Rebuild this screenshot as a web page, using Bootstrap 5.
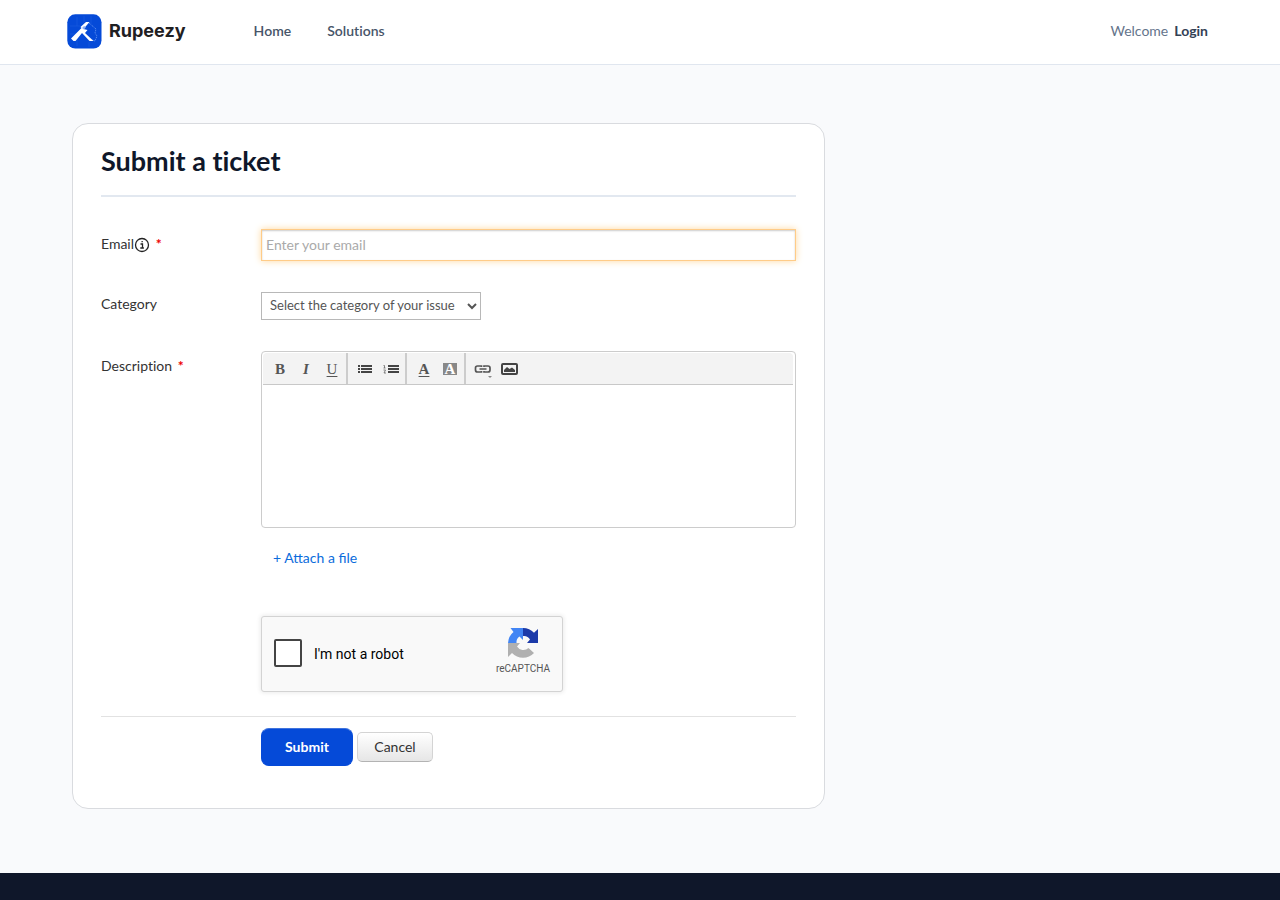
<!DOCTYPE html>
<html lang="en">
<head>
<meta charset="utf-8">
<meta name="viewport" content="width=device-width, initial-scale=1">
<title>Submit a ticket : Rupeezy</title>
<link rel="stylesheet" href="https://cdn.jsdelivr.net/npm/bootstrap@5.3.0/dist/css/bootstrap.min.css">
<style>
body { background: #f9fafc; color: #333; font-family: Lato, "Liberation Sans", sans-serif; font-size: 14px; line-height: 20px; font-variant-ligatures: no-common-ligatures; }
.wrap { width: 100%; max-width: 1168px; padding: 0 16px; margin: 0 auto; }
.topbar { border-bottom: 1px solid #e0e6ef; }
.topbar .wrap { min-height: 64px; padding-bottom: 2px; }
.brand { gap: 7px; margin-left: -5px; color: #1f2022; font: 700 18px/24px Inter, sans-serif; text-decoration: none; }
.menu { gap: 36px; margin-left: 68px; }
.menu a { color: #475569; font-weight: 600; text-decoration: none; }
.welcome { color: #64748b; }
.login { color: #334155; font-weight: 700; text-decoration: none; margin-left: 6px; }
main { padding: 58px 0 64px; }
.panel { background: #fff; border: 1px solid #d9dbdf; border-radius: 16px; padding: 20px 28px 42px; }
h1 { color: #0f172a; font-size: 27px; line-height: 34px; font-weight: 700; margin: 0 0 32px; padding-bottom: 17px; border-bottom: 2px solid #e2e8f0; }
.line { display: flex; margin-bottom: 31px; }
.line:last-of-type { margin-bottom: 0; }
.label-col { flex: 0 0 160px; }
.label-col label { display: block; padding-top: 5px; }
.label-col .lb-short { padding-top: 2px; }
.field-col { flex: 1 1 0; min-width: 0; }
.req { color: #e00; font-weight: 700; margin-left: 2px; }
.email { height: 32px; padding: 3px 4px 5px; border: 1px solid #fc8; border-radius: 0; font-size: 14px; box-shadow: inset 0 1px 2px #ccc, 0 0 7px #ffd9a0; }
.email:focus { border-color: #fc8; box-shadow: inset 0 1px 2px #ccc, 0 0 7px #ffd9a0; }
.email::placeholder { color: #aaa; }
.category { display: block; width: 220px; max-width: 100%; height: 28px; padding: 0 4px 2px; border: 1px solid #b8b8b8; background: #fff; color: #555; font-size: 13px; }
.editor { border: 1px solid #ccc; border-radius: 4px; padding: 1px 2px 2px 1px; }
.tools { background: #f3f3f3; border-bottom: 1px solid #c8c8c8; border-radius: 4px 4px 0 0; height: 32px; }
.tool-set { padding: 0 1px 0 4px; border-right: 2px solid #ccc; }
.tool-set:last-child { border-right: 0; }
.tool { width: 26px; padding: 0; border: 0; background: none; color: #555; font: 700 15px/30px "Liberation Serif", serif; }
.tool u { text-decoration-thickness: 1px; text-underline-offset: 2px; }
.tool .swatch { display: block; width: 14px; height: 12px; margin: 0 auto; background: #888; color: #fff; line-height: 12px; }
.tool svg { display: block; margin: 0 auto; }
.editor textarea { display: block; width: 100%; height: 140px; border: 0; outline: 0; resize: none; padding: 8px; }
.attach { display: inline-block; margin: 20px 12px 0; color: #0b6cdc; text-decoration: none; font-variant-ligatures: normal; }
.robot { max-width: 302px; height: 76px; margin-top: 48px; padding: 0 12px; background: #f9f9f9; border: 1px solid #d3d3d3; border-radius: 3px; box-shadow: 0 0 4px 1px rgba(0,0,0,.08); font-family: Roboto, sans-serif; color: #000; }
.robot input { appearance: none; width: 28px; height: 28px; margin: 0 12px 2px 0; border: 2px solid #444; border-radius: 2px; background: #fff; }
.robot input:checked { background: #4a90e2; }
.captcha { font-size: 10px; line-height: 12px; color: #555; margin: 0 0 6px; }
.actions { margin-top: 24px; padding: 11px 0 0 160px; border-top: 1px solid #e2e2e2; gap: 4px; }
.btn-send { width: 92px; height: 38px; padding: 0 0 1px; background: #054ad8; border: 1px solid #054ad8; border-top-color: #3f73dd; border-radius: 8px; color: #fff; font-size: 14px; font-weight: 700; }
.btn-drop { width: 76px; height: 30px; padding: 0; background: linear-gradient(#fff, #e6e6e6); border: 1px solid #d4d4d4; border-bottom-color: #b3b3b3; border-radius: 5px; color: #333; font-size: 14px; line-height: 20px; }
footer { background: #0f172a; height: 27px; }
</style>
</head>
<body>
<header class="topbar bg-white">
  <div class="wrap d-flex align-items-center">
    <a class="brand d-flex align-items-center" href="#">
      <svg width="35" height="35" viewBox="0 0 35 35" aria-hidden="true">
        <rect x=".3" y=".3" width="34.2" height="34.2" rx="8" fill="#054ad8"/>
        <path d="M10 3v9M17 2v8M24 2v8M3 12h10M3 20h6M10 22v10M22 28v5" stroke="#1c5be0" stroke-width=".6" fill="none"/>
        <path d="M22 9l7 6-1 4 2 3-2 5-3-1" fill="none" stroke="#6c9af2" stroke-width=".8" stroke-dasharray="1.2 .8"/>
        <path d="M4 24.500L14.500 14l-1-1L19 8h3.500L16.500 15l4 1-2.500 3 8.500 8H22.500L15 19 8.500 27H6.500z" fill="#fff"/>
        <path d="M15 14l2-2 2 1-2 2.500z" fill="#8fb1f2"/>
      </svg>
      <span>Rupeezy</span>
    </a>
    <nav class="menu d-flex"><a href="#">Home</a><a href="#">Solutions</a></nav>
    <div class="ms-auto"><span class="welcome">Welcome</span><a class="login" href="#">Login</a></div>
  </div>
</header>
<main>
  <div class="wrap">
    <div class="row g-0">
      <div class="col-lg-8 pe-lg-1">
        <form class="panel" onsubmit="return false">
          <h1>Submit a ticket</h1>
          <div class="line">
            <div class="label-col"><label for="email">Email<svg width="16" height="16" viewBox="0 0 16 16" aria-hidden="true"><circle cx="8" cy="8" r="6.500" fill="none" stroke="#222" stroke-width="1.300"/><path d="M6.500 7h2v4M6.300 11h3.600M7.500 4.700h1.300" fill="none" stroke="#222" stroke-width="1.300"/></svg> <span class="req">*</span></label></div>
            <div class="field-col"><input class="form-control email" id="email" type="email" placeholder="Enter your email"></div>
          </div>
          <div class="line">
            <div class="label-col"><label class="lb-short" for="category">Category</label></div>
            <div class="field-col"><select class="category" id="category"><option>Select the category of your issue</option></select></div>
          </div>
          <div class="d-flex">
            <div class="label-col"><label for="description">Description <span class="req">*</span></label></div>
            <div class="field-col">
              <div class="editor">
                <div class="tools d-flex">
                  <div class="tool-set d-flex">
                    <button class="tool" type="button" aria-label="Bold">B</button>
                    <button class="tool fst-italic" type="button" aria-label="Italic">I</button>
                    <button class="tool fw-normal" type="button" aria-label="Underline"><u>U</u></button>
                  </div>
                  <div class="tool-set d-flex">
                    <button class="tool" type="button" aria-label="Bulleted list"><svg width="14" height="10" viewBox="0 0 14 10"><path d="M0 2h2M0 5h2M0 8h2M3 2h11M3 5h11M3 8h11" stroke="#444" stroke-width="2"/></svg></button>
                    <button class="tool" type="button" aria-label="Numbered list"><svg width="16" height="10" viewBox="0 0 16 10"><path d="M5 2h11M5 5h11M5 8h11" stroke="#444" stroke-width="2"/><path d="M.5 1.500h1V4M.5 4h2M.5 6h2L1 9h2" fill="none" stroke="#666" stroke-width=".8"/></svg></button>
                  </div>
                  <div class="tool-set d-flex">
                    <button class="tool" type="button" aria-label="Text colour"><u>A</u></button>
                    <button class="tool" type="button" aria-label="Background colour"><span class="swatch">A</span></button>
                  </div>
                  <div class="tool-set d-flex">
                    <button class="tool" type="button" aria-label="Link"><svg width="18" height="20" viewBox="0 0 18 20"><path d="M7.500 8V7H3.500a2 2 0 0 0-2 2v2a2 2 0 0 0 2 2h4v-1M10 8V7h4a2 2 0 0 1 2 2v2a2 2 0 0 1-2 2h-4v-1M5.500 10h7" fill="none" stroke="#555" stroke-width="1.700"/><path d="M14 17h4l-2 2z" fill="#888"/></svg></button>
                    <button class="tool" type="button" aria-label="Image"><svg width="17" height="12" viewBox="0 0 17 12"><rect x="1" y="1" width="15" height="10" rx="1" fill="none" stroke="#444" stroke-width="2"/><path d="M3 9V7l3-3 2.500 2L11 4.500 14 7v2z" fill="#444"/></svg></button>
                  </div>
                </div>
                <textarea id="description"></textarea>
              </div>
              <a class="attach" href="#">+ Attach a file</a>
              <div class="robot d-flex align-items-center">
                <input type="checkbox" id="robot"><label for="robot">I'm not a robot</label>
                <div class="captcha ms-auto text-center">
                  <svg class="d-block mx-auto mb-1" width="32" height="32" viewBox="0 0 32 32" aria-hidden="true">
                    <path d="M16 1a15 15 0 0 1 11 4.700L31 2v14H20l3-3.500A7 7 0 0 0 16 9z" fill="#1c3aa9"/>
                    <path d="M1 16A15 15 0 0 1 6.500 5L3.500 1H16v12l-3.500-3.500A7 7 0 0 0 9.500 16z" fill="#4285f4"/>
                    <path d="M1 16h12l-3 3.500a7.500 7.500 0 0 0 11.500 1.500l5.500 5A15 15 0 0 1 5 26l-4 4z" fill="#b0b0b0"/>
                  </svg>
                  reCAPTCHA
                </div>
              </div>
            </div>
          </div>
          <div class="actions d-flex align-items-center">
            <button class="btn btn-send" type="submit">Submit</button>
            <button class="btn btn-drop" type="button">Cancel</button>
          </div>
        </form>
      </div>
    </div>
  </div>
</main>
<footer></footer>
<script src="https://cdn.jsdelivr.net/npm/bootstrap@5.3.0/dist/js/bootstrap.bundle.min.js"></script>
</body>
</html>
